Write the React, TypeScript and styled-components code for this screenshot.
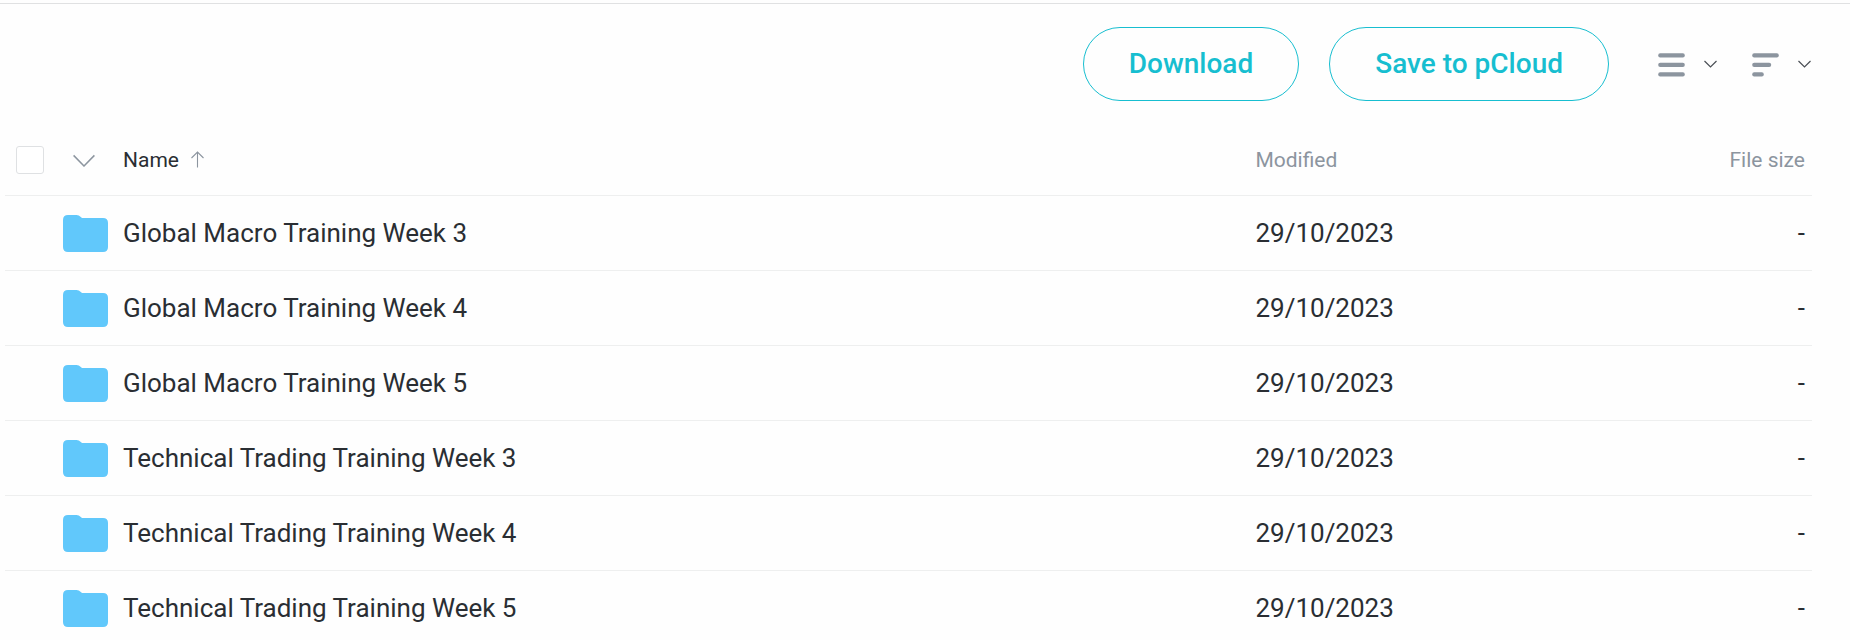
import React from "react";
import styled, { createGlobalStyle } from "styled-components";

const GlobalStyle = createGlobalStyle`
  *, *::before, *::after { box-sizing: border-box; }
  body {
    margin: 0;
    background: #fefefe;
    color: #2a2e33;
    font-family: Roboto, "Liberation Sans", sans-serif;
  }
`;

const Page = styled.main`
  padding: 3px 38px 0 5px;
`;

const TopRule = styled.div`
  height: 1px;
  margin: 0 -38px 0 -5px;
  background: #e0e1e2;
`;

const Toolbar = styled.div`
  display: flex;
  align-items: center;
  justify-content: flex-end;
  gap: 30px;
  padding: 23px 1px 0 0;
`;

const PillButton = styled.button`
  height: 74px;
  padding: 0 45px;
  border: 1px solid #17bed0;
  border-radius: 37px;
  background: transparent;
  color: #17bed0;
  font: 500 28px/32px Roboto, "Liberation Sans", sans-serif;
  white-space: nowrap;
  cursor: pointer;
`;

const ViewControls = styled.div`
  display: flex;
  gap: 35px;
  margin-left: 19px;
`;

const MenuButton = styled.button`
  display: flex;
  align-items: center;
  gap: 19px;
  padding: 2px 0 0;
  border: 0;
  background: transparent;
  color: #8c959f;
  cursor: pointer;

  svg { display: block; }
`;

const FileTable = styled.table`
  width: 100%;
  margin-top: 20px;
  border-collapse: separate;
  border-spacing: 0;
  table-layout: fixed;
`;

const Column = styled.col<{ $width?: string }>`
  width: ${({ $width }) => $width ?? "auto"};
`;

const HeadCell = styled.th<{ $align?: string; $inset?: number }>`
  height: 75px;
  padding: 3px 7px 0 ${({ $inset = 0 }) => $inset}px;
  border-bottom: 1px solid #eeefef;
  color: #8c959f;
  font-size: 21px;
  font-weight: 400;
  line-height: 24px;
  text-align: ${({ $align = "left" }) => $align};
`;

const Cell = styled.td<{ $align?: string }>`
  height: 75px;
  padding: 0 7px 0 0;
  border-bottom: 1px solid #eeefef;
  font-size: 26px;
  line-height: 32px;
  text-align: ${({ $align = "left" }) => $align};
`;

const SelectAll = styled.input`
  display: block;
  width: 28px;
  height: 28px;
  margin: 0;
  appearance: none;
  border: 1px solid #dfe1e3;
  border-radius: 3px;
  background: #fff;

  &:checked { background: #17bed0; }
`;

const PlainButton = styled.button<{ $strong?: boolean }>`
  display: flex;
  align-items: center;
  gap: 12px;
  padding: 0;
  border: 0;
  background: transparent;
  color: ${({ $strong }) => ($strong ? "#2a2e33" : "#8c959f")};
  font: inherit;
  cursor: pointer;

  svg { display: block; }
`;

const FolderSvg = styled.svg`
  display: block;
`;

const Chevron = () => (
  <svg width="13" height="10" viewBox="0 0 13 10" fill="none" stroke="#4a4f55" strokeWidth="1.2" aria-hidden="true">
    <path d="M0.5 1L6.5 7L12.5 1" />
  </svg>
);

const Bars = ({ widths }: { widths: number[] }) => (
  <svg width="27" height="24" viewBox="0 0 27 24" fill="currentColor" aria-hidden="true">
    {widths.map((width, i) => (
      <rect key={i} x="0.2" y={i * 9.5 + 0.2} width={width} height="4.2" rx="2" />
    ))}
  </svg>
);

const Folder = () => (
  <FolderSvg width="45" height="38" viewBox="0 0 45 38" fill="#61c8fb" aria-hidden="true">
    <path d="M5 1H13.5Q16 1 17.8 3L19 4H40Q45 4 45 9V33Q45 38 40 38H5Q0 38 0 33V6Q0 1 5 1Z" />
  </FolderSvg>
);

const folders = [
  "Global Macro Training Week 3",
  "Global Macro Training Week 4",
  "Global Macro Training Week 5",
  "Technical Trading Training Week 3",
  "Technical Trading Training Week 4",
  "Technical Trading Training Week 5",
];

export default function App() {
  return (
    <>
      <GlobalStyle />
      <Page>
        <TopRule />
        <Toolbar>
          <PillButton type="button">Download</PillButton>
          <PillButton type="button">Save to pCloud</PillButton>
          <ViewControls>
            <MenuButton type="button" aria-label="View">
              <Bars widths={[26.6, 26.6, 26.6]} />
              <Chevron />
            </MenuButton>
            <MenuButton type="button" aria-label="Sort">
              <Bars widths={[26.6, 19, 11.6]} />
              <Chevron />
            </MenuButton>
          </ViewControls>
        </Toolbar>
        <FileTable>
          <colgroup>
            <Column $width="58px" />
            <Column $width="60px" />
            <Column />
            <Column $width="15.4%" />
            <Column $width="15.4%" />
          </colgroup>
          <thead>
            <tr>
              <HeadCell $inset={11}>
                <SelectAll type="checkbox" aria-label="Select all" />
              </HeadCell>
              <HeadCell $inset={10}>
                <PlainButton type="button" aria-label="Selection options">
                  <svg width="22" height="14" viewBox="0 0 22 14" fill="none" stroke="currentColor" strokeWidth="1.5" aria-hidden="true">
                    <path d="M0.6 2.4L11 13L21.4 2.4" />
                  </svg>
                </PlainButton>
              </HeadCell>
              <HeadCell>
                <PlainButton type="button" $strong>
                  Name
                  <svg width="14" height="18" viewBox="0 0 14 18" fill="none" stroke="#8c959f" strokeWidth="1.1" aria-hidden="true">
                    <path d="M6.5 16.5V1M0.5 7L6.5 1L12.5 7" />
                  </svg>
                </PlainButton>
              </HeadCell>
              <HeadCell>Modified</HeadCell>
              <HeadCell $align="right">File size</HeadCell>
            </tr>
          </thead>
          <tbody>
            {folders.map((name) => (
              <tr key={name}>
                <Cell />
                <Cell><Folder /></Cell>
                <Cell>{name}</Cell>
                <Cell>29/10/2023</Cell>
                <Cell $align="right">-</Cell>
              </tr>
            ))}
          </tbody>
        </FileTable>
      </Page>
    </>
  );
}
